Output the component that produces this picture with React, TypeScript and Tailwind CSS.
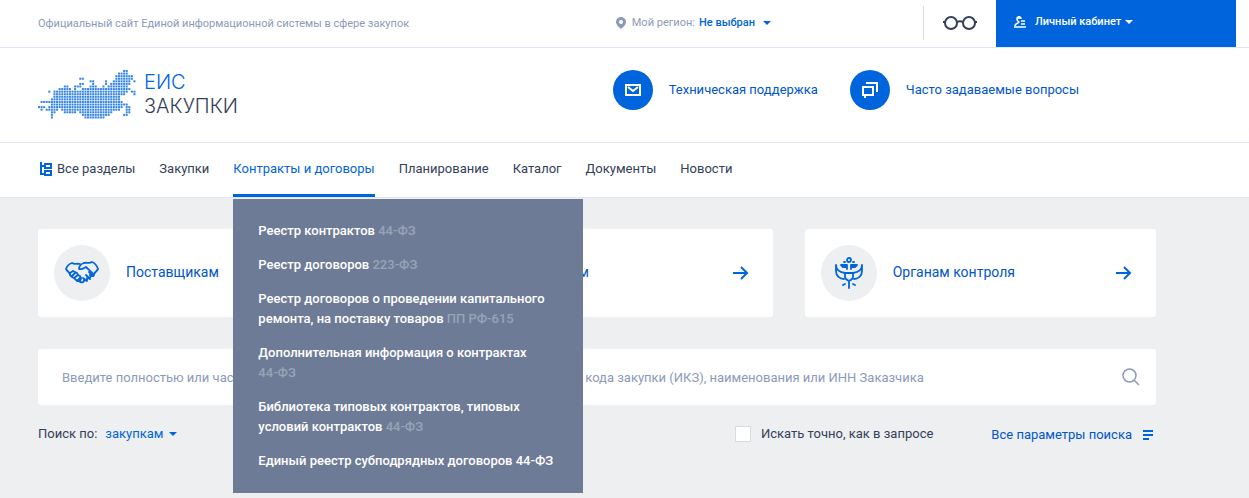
import type { ReactNode } from "react";

// Each pair is [first column, last column] of a run of dots
const mapRows: number[][][] = [
  [[33, 34]],
  [[31, 34]],
  [[30, 36]],
  [[16, 17], [30, 36]],
  [[20, 21], [26, 26], [29, 35], [37, 37]],
  [[16, 17], [21, 21], [26, 26], [28, 35]],
  [[10, 11], [14, 16], [20, 22], [25, 25], [27, 34]],
  [[8, 12], [14, 14], [17, 35]],
  [[4, 4], [6, 34], [36, 37]],
  [[6, 33], [37, 37]],
  [[6, 31]],
  [[5, 31]],
  [[1, 32]],
  [[5, 34]],
  [[0, 2], [4, 32], [34, 35]],
  [[1, 1], [3, 7], [9, 31], [34, 35]],
  [[5, 6], [10, 14], [16, 28], [34, 35]],
  [[5, 5], [17, 27], [33, 34]],
  [[5, 5], [18, 25]],
];

const navItems = ["Закупки", "Контракты и договоры", "Планирование", "Каталог", "Документы", "Новости"];

const menuItems = [
  { title: "Реестр контрактов", law: "44-ФЗ" },
  { title: "Реестр договоров", law: "223-ФЗ" },
  { title: "Реестр договоров о проведении капитального ремонта, на поставку товаров", law: "ПП РФ-615" },
  { title: "Дополнительная информация о контрактах", law: "44-ФЗ" },
  { title: "Библиотека типовых контрактов, типовых условий контрактов", law: "44-ФЗ" },
  { title: "Единый реестр субподрядных договоров 44-ФЗ" },
];

function Caret() {
  return (
    <svg className="h-1 w-2 shrink-0" viewBox="0 0 8 4" fill="currentColor">
      <path d="M0 0h8L4 4z" />
    </svg>
  );
}

function Logo() {
  return (
    <a href="#" className="flex items-start gap-2">
      <svg className="h-[50px] w-[98px]" viewBox="0 0 98 50" fill="#0065dc" fillOpacity="0.8">
        {mapRows.map((row, y) =>
          row.map(([from, to]) =>
            Array.from({ length: to - from + 1 }, (_, i) => (
              <rect key={`${y}-${from + i}`} x={(from + i) * 2.58} y={y * 2.58} width="2" height="2" />
            ))
          )
        )}
      </svg>
      <span className="flex flex-col font-[Inter] text-[20px] leading-6 font-light text-[#334059]">
        <span className="text-[#0065dc]">ЕИС</span>
        <span>ЗАКУПКИ</span>
      </span>
    </a>
  );
}

function HandshakeIcon() {
  return (
    <svg className="h-6 w-[34px]" viewBox="0 0 34 24" fill="none" stroke="#0065dc" strokeWidth="1.8" strokeLinecap="round" strokeLinejoin="round">
      <path d="M15 3c-3-1-5 1-8-1C4 3 2 5 1 8c1 2 3 3 4 5M19 2c3-1 5 1 8-1 3 1 5 4 6 7-1 2-3 3-4 5" />
      <path d="M19 2c-3 1-5 3-5 6 3 1 5-1 7-2 3 3 6 5 8 8-1 2-3 1-4 0 1 2 0 4-3 3 1 2-1 3-3 2 0 3-3 3-5 1" />
      <path d="M5 12l3-2 2 1 2 1 1 2 2 1 1 2c0 2-1 3-3 3l-2-1-2-2-2-1-2-2zM7 15l3-3M9 17l4-3M12 20l3-3M21 14l4 4M18 17l4 3M24 11l4 4" />
    </svg>
  );
}

function BagIcon() {
  return (
    <svg className="h-8 w-8" viewBox="0 0 32 32" fill="none" stroke="#0065dc" strokeWidth="2">
      <path d="M4 10h24v17H4zM11 10V5h10v5M4 18h24" />
    </svg>
  );
}

function EagleIcon() {
  return (
    <svg className="h-8 w-7" viewBox="0 0 28 32" fill="none" stroke="#0065dc" strokeWidth="1.8" strokeLinecap="round" strokeLinejoin="round">
      <circle cx="14" cy="3" r="2" />
      <path d="M9 5h1M18 5h1M6 8h6v2H8zM22 8h-6v2h4zM12 10v2M16 10v2" />
      <path d="M1 8c0 4 3 7 9 8M27 8c0 4-3 7-9 8M1 8v6c0 5 4 8 8 8M27 8v6c0 5-4 8-8 8" />
      <path d="M10 16h8v4c0 2-2 3-4 4-2-1-4-2-4-4zM14 24v7M10 27l-2 1M18 27l2 1" />
    </svg>
  );
}

function ArrowIcon() {
  return (
    <svg className="h-4 w-4" viewBox="0 0 16 16" fill="none" stroke="#0065dc" strokeWidth="2">
      <path d="M0 8h14M8 2l6 6-6 6" />
    </svg>
  );
}

function AudienceCard({ title, icon }: { title: string; icon: ReactNode }) {
  return (
    <a href="#" className="flex h-[88px] items-center rounded-[3px] bg-white pr-6 pl-4 text-[#0055cc]">
      <span className="flex size-14 items-center justify-center rounded-full bg-[#eeeff1]">{icon}</span>
      <span className="ml-4 flex-1 pb-[2px] text-[14px] leading-5">{title}</span>
      <ArrowIcon />
    </a>
  );
}

function HelpLink({ title, icon }: { title: string; icon: ReactNode }) {
  return (
    <a href="#" className="flex items-center gap-4 text-[#0055cc]">
      <span className="flex size-10 items-center justify-center rounded-full bg-[#0065dc]">{icon}</span>
      {title}
    </a>
  );
}

function SectionMenu() {
  return (
    <ul className="absolute top-full left-0 z-10 mt-[2px] flex w-[350px] flex-col gap-[14px] bg-[#6e7b96] px-[25px] py-[22px] font-medium text-white">
      {menuItems.map((item) => (
        <li key={item.title}>
          <a href="#">
            {item.title} {item.law && <span className="whitespace-nowrap text-[#99a3b8]">{item.law}</span>}
          </a>
        </li>
      ))}
    </ul>
  );
}

export default function App() {
  return (
    <div className="min-h-screen bg-[#eeeff1] font-[Roboto,sans-serif] text-[13px] leading-5 text-[#334059]">
      <header className="bg-white">
        {/* Top bar */}
        <div className="flex h-12 items-start border-b border-[#dfe7f7] pr-[13px] pl-[38px] text-[11px]">
          <span className="flex-1 pt-[14px] text-[#8c9ab9]">
            Официальный сайт Единой информационной системы в сфере закупок
          </span>
          <button className="mr-[152px] flex items-center pt-[13px]">
            <svg className="mr-[6px] h-3 w-[10px]" viewBox="0 0 10 12" fill="#8c9ab9" fillRule="evenodd">
              <path d="M5 0a5 5 0 0 1 5 5c0 3-3 5-5 7-2-2-5-4-5-7a5 5 0 0 1 5-5zm0 3a2 2 0 1 0 0 4 2 2 0 0 0 0-4z" />
            </svg>
            <span className="mr-1 text-[#8c9ab9]">Мой регион:</span>
            <span className="mr-2 font-medium text-[#0065dc]">Не выбран</span>
            <span className="text-[#0065dc]"><Caret /></span>
          </button>
          <button className="mt-[6px] flex h-[34px] w-[73px] items-center justify-center border-l border-[#d9dce3]" aria-label="Версия для слабовидящих">
            <svg className="h-[14px] w-[34px]" viewBox="0 0 34 14" fill="none" stroke="#334059" strokeWidth="2">
              <circle cx="8" cy="7" r="6" />
              <circle cx="26" cy="7" r="6" />
              <path d="M14 6c2-1 4-1 6 0M0 6h2M32 6h2" />
            </svg>
          </button>
          <button className="flex h-[47px] w-60 items-center bg-[#0065dc] pb-1 pl-[18px] font-medium text-white">
            <svg className="mr-[9px] h-3 w-3" viewBox="0 0 12 12" fill="none" stroke="#fff" strokeWidth="1.6">
              <path d="M7 3c0-3-4-3-4 0 0 2 1 2 2 3C4 8 1 7 1 10M3 2h4M7 5h4M7 8h4M0 11h12" />
            </svg>
            <span className="mr-1">Личный кабинет</span>
            <Caret />
          </button>
        </div>

        {/* Logo and help links */}
        <div className="flex h-[95px] items-start justify-between border-b border-[#dfe7f7] pt-[22px] pr-[170px] pl-[38px]">
          <Logo />
          <div className="flex gap-8">
            <HelpLink
              title="Техническая поддержка"
              icon={
                <svg className="h-3 w-4" viewBox="0 0 16 12" fill="none" stroke="#fff" strokeWidth="2">
                  <path d="M1 1h14v10H1zM3 3l5 4 5-4" />
                </svg>
              }
            />
            <HelpLink
              title="Часто задаваемые вопросы"
              icon={
                <svg className="size-4" viewBox="0 0 16 16" fill="none" stroke="#fff" strokeWidth="2">
                  <path d="M4 1h11v9M1 5h10v8H1zM3 13v3" />
                </svg>
              }
            />
          </div>
        </div>

        {/* Sections */}
        <nav className="flex h-[55px] items-stretch gap-6 border-b border-[#dfe7f7] pl-[40px]">
          <button className="flex items-center gap-[5px] pb-[2px]">
            <svg className="h-[14px] w-3" viewBox="0 0 12 14" fill="none" stroke="#0065dc" strokeWidth="2">
              <path d="M1 0v12h4M1 4h4M5 2h6v4H5zM5 9h6v4H5z" />
            </svg>
            Все разделы
          </button>
          {navItems.map((item) =>
            item === "Контракты и договоры" ? (
              <div key={item} className="relative flex">
                <a href="#" className="flex items-center border-b-3 border-[#0065dc] pt-px text-[#0065dc]">
                  {item}
                </a>
                <SectionMenu />
              </div>
            ) : (
              <a key={item} href="#" className="flex items-center pb-[2px]">
                {item}
              </a>
            )
          )}
        </nav>
      </header>

      <main className="pt-[31px] pr-[93px] pl-[38px]">
        <div className="grid grid-cols-3 gap-8">
          <AudienceCard title="Поставщикам" icon={<HandshakeIcon />} />
          <AudienceCard title="Заказчикам" icon={<BagIcon />} />
          <AudienceCard title="Органам контроля" icon={<EagleIcon />} />
        </div>

        <form onSubmit={(e) => e.preventDefault()}>
          <div className="mt-8 flex h-14 items-center rounded-[3px] bg-white pr-4 pl-6">
            <input
              type="text"
              aria-label="Поиск"
              className="min-w-0 flex-1 pt-[2px] outline-none placeholder:text-[#8c9ab9]"
              placeholder="Введите полностью или часть номера, наименования закупки, идентификационного кода закупки (ИКЗ), наименования или ИНН Заказчика"
            />
            <button aria-label="Найти">
              <svg className="size-[18px]" viewBox="0 0 18 18" fill="none" stroke="#8c9ab9" strokeWidth="1.5">
                <circle cx="7.5" cy="7.5" r="6.5" />
                <path d="M12 12l5 5" />
              </svg>
            </button>
          </div>

          <div className="mt-[18px] flex items-center">
            <span>Поиск по:</span>
            <button type="button" className="ml-2 flex items-center gap-[6px] text-[#0065dc]">
              закупкам
              <Caret />
            </button>
            <label className="ml-auto flex items-center gap-[10px]">
              <input type="checkbox" className="size-4 appearance-none border border-[#d5dae3] bg-white" />
              Искать точно, как в запросе
            </label>
            <a href="#" className="ml-[58px] flex items-center gap-[11px] pt-[2px] pr-[3px] text-[#0055cc]">
              Все параметры поиска
              <svg className="h-[10px] w-[10px]" viewBox="0 0 10 10" fill="#0065dc">
                <path d="M0 0h10v2H0zM0 4h10v2H0zM0 8h6v2H0z" />
              </svg>
            </a>
          </div>
        </form>
      </main>
    </div>
  );
}
